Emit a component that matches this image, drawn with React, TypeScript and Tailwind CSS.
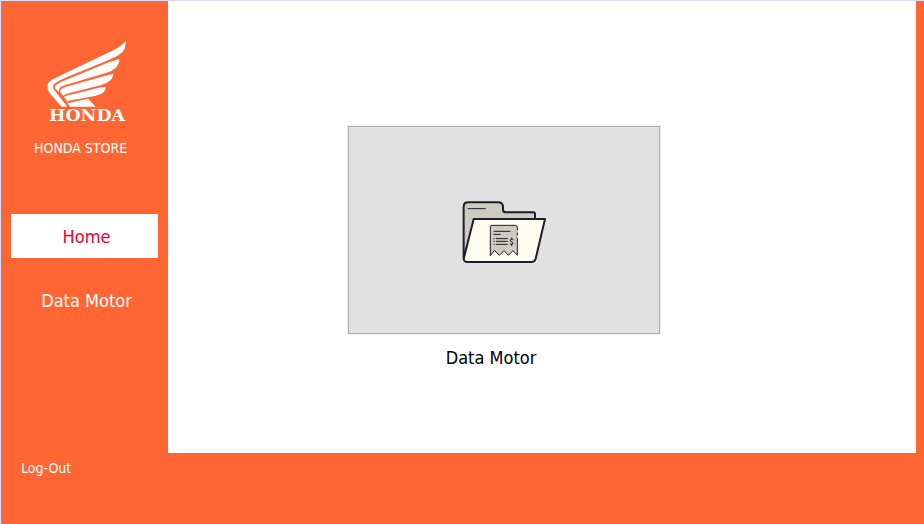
import React from 'react';

function WingLogo() {
  return (
    <svg viewBox="5 12 240 252" className="h-[84px] w-20" role="img" aria-label="Honda">
      <g fill="#ffffff">
        <path d="M241 15 L239 35 Q234 48 220 57 Q210 64 190 72 L60 125 Q30 138 24 147 Q20 153 25 160 L66 212 H48 L12 170 Q5 160 6 148 Q8 136 28 127 L205 42 Q228 30 241 15 Z" />
        <path d="M222 69 Q222 85 210 97 Q200 106 182 111 L60 147 Q45 151 42 158 L40 168 L28 156 Q26 147 48 137 L190 79 Q210 73 222 69 Z" />
        <path d="M204 113 Q203 130 188 138 Q180 144 165 148 L70 172 Q58 174 54 180 L44 168 Q44 158 62 152 L180 119 Q195 116 204 113 Z" />
        <path d="M182 152 Q180 166 170 172 Q162 177 148 180 L78 193 Q70 194 66 197 L56 184 Q58 179 72 177 L160 155 Z" />
        <path d="M66 202 L128 188 L151 212 H74 Z" />
      </g>
      <text
        x="125"
        y="255"
        textAnchor="middle"
        fill="#ffffff"
        className="font-['DejaVu_Serif',serif] text-[52px] font-bold"
      >
        HONDA
      </text>
    </svg>
  );
}

function FolderIcon() {
  return (
    <svg viewBox="22 30 255 192" className="h-16 w-[85px]" aria-hidden="true">
      <g stroke="#1b1e2b" strokeWidth="6" strokeLinejoin="round" strokeLinecap="round">
        <path d="M27 205 V50 Q27 37 42 37 H130 Q144 37 145 50 V60 Q146 67 154 67 H236 Q241 67 241 73 V92 H60 Z" fill="#cdccbf" />
        <path d="M57 87 H271 L243 206 Q240 216 230 216 H38 Q25 215 28 203 Z" fill="#fffdf0" />
      </g>
      <g stroke="#1b1e2b" strokeWidth="3" strokeLinecap="round" fill="none">
        <path d="M40 56 H92" />
        <path
          d="M107 196 V111 Q107 106 112 106 H182 Q188 106 188 112 V196 L175 182 L161 196 L148 182 L134 196 L120 182 Z"
          fill="#cdccbf"
          strokeLinejoin="round"
        />
        <path d="M188 122 V126 M188 138 V142" stroke="#fffdf0" />
        <path d="M118 124 H166 M118 133 H137 M125 146 H158 M125 154 H158 M125 163 H158" />
        <path d="M118 146 H119 M118 154 H119 M118 163 H119" />
        <path d="M176 149 Q173 146 170 147 Q165 149 167 153 L174 157 Q177 161 172 163 Q168 164 166 161 M171 144 V147 M171 163 V167" />
      </g>
    </svg>
  );
}

export default function App() {
  return (
    <div className="flex min-h-screen border-t border-l border-[#dcdcff] bg-[#ff6633] font-['DejaVu_Sans_Condensed',Tahoma,sans-serif]">
      <aside className="flex w-[167px] shrink-0 flex-col px-[10px] pt-[39px]">
        <div className="flex flex-col pl-6">
          <div className="pl-3">
            <WingLogo />
          </div>
          <p className="mt-[14px] -ml-px text-[14px] leading-5 whitespace-nowrap text-white">HONDA STORE</p>
        </div>
        <nav className="mt-14 flex flex-col gap-5">
          <button type="button" className="h-11 bg-white pl-1 text-[18px] text-[#f00032]">
            Home
          </button>
          <button type="button" className="h-11 pl-1 text-[18px] text-white">
            Data Motor
          </button>
        </nav>
        <button type="button" className="mt-[136px] self-start px-[10px] text-left text-[14px] leading-5 text-white">
          Log-Out
        </button>
      </aside>
      <main className="mr-2 mb-[71px] flex flex-1 flex-col items-start bg-white pt-[124px] pl-[179px]">
        <div className="flex flex-col">
          <button
            type="button"
            aria-labelledby="data-motor"
            className="flex h-[210px] w-[314px] items-center justify-center border border-[#f0f0f0]"
          >
            <span className="flex h-full w-full items-center justify-center border border-[#adadad] bg-[#e1e1e1] pt-1">
              <FolderIcon />
            </span>
          </button>
          <p id="data-motor" className="mt-[11px] pr-[26px] text-center text-[18px] leading-6 text-black">
            Data Motor
          </p>
        </div>
      </main>
    </div>
  );
}
